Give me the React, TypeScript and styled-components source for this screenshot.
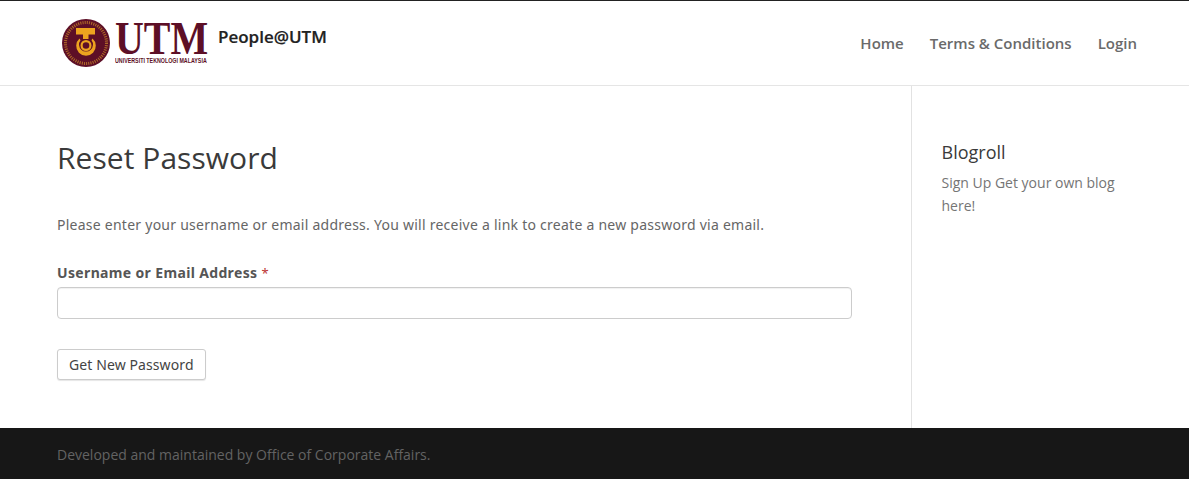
import React from "react";
import styled, { createGlobalStyle } from "styled-components";

const Global = createGlobalStyle`
  html, body { margin: 0; padding: 0; background: #fff; }
  body { font-family: "Open Sans", "Liberation Sans", sans-serif; color: #666; }
  * { box-sizing: border-box; }
`;
const Page = styled.div`
  width: 1189px; height: 479px; display: flex; flex-direction: column; overflow: hidden;
`;
const Header = styled.header`
  height: 86px; flex: none; border-top: 1px solid #222; border-bottom: 1px solid #e5e5e5;
  display: flex; justify-content: space-between; padding: 0 52px 0 62px;
`;
const Brand = styled.div`
  display: flex; align-items: flex-start; padding-top: 18px;
`;
const Wordmark = styled.div`
  display: flex; flex-direction: column; margin-left: 5px; width: 93px; color: #5d0f26;
`;
const Letters = styled.span`
  font: 700 47px/38px "Liberation Serif", serif; transform: scaleX(0.85); transform-origin: left; white-space: nowrap; height: 38px;
`;
const Tagline = styled.span`
  font: 700 7px/8px "Liberation Sans", sans-serif; white-space: nowrap; transform: scaleX(0.76); transform-origin: left; width: 121px;
`;
const SiteName = styled.span`
  font-size: 17px; font-weight: 600; color: #222; line-height: 22px; margin: 7px 0 0 10px; -webkit-text-stroke: 0.2px #222;
`;
const Nav = styled.nav`
  display: flex; gap: 26px; padding-top: 32px;
`;
const NavLink = styled.a`
  font-size: 15px; font-weight: 600; color: #6a6a6a; line-height: 21px;
`;
const Body = styled.div`
  flex: 1; display: flex; min-height: 0;
`;
const Main = styled.main`
  width: 912px; flex: none; border-right: 1px solid #e2e2e2; padding: 51px 59px 0 57px;
`;
const Title = styled.h1`
  margin: 0; font-size: 30px; font-weight: 400; line-height: 42px; color: #3a3a3a; letter-spacing: 0.05px;
`;
const Intro = styled.p`
  margin: 34px 0 0; font-size: 14px; line-height: 24px; color: #666; letter-spacing: 0.25px; white-space: nowrap;
  font-family: "Noto Sans", "Open Sans", sans-serif;
`;
const Label = styled.label`
  display: block; margin-top: 24px; font-size: 14px; font-weight: 700; line-height: 24px; color: #555; letter-spacing: 0.35px;
  font-family: "Noto Sans", "Open Sans", sans-serif;
`;
const Required = styled.span`
  color: #b33; font-weight: 400; font-size: 13px;
`;
const Input = styled.input`
  display: block; width: 795px; height: 32px; margin-top: 2px; border: 1px solid #ccc; border-radius: 4px; background: #fff;
  box-shadow: inset 0 1px 1px rgba(0,0,0,0.06); outline: none;
`;
const Button = styled.button`
  display: block; margin-top: 30px; height: 31px; padding: 0 11px; background: #fff; border: 1px solid #ccc; border-radius: 3px;
  box-shadow: 0 1px 1px rgba(0,0,0,0.1); font: 400 14px/20px "Noto Sans", "Open Sans", sans-serif; color: #444; letter-spacing: 0.1px;
`;
const Sidebar = styled.aside`
  flex: 1; padding: 53px 30px 0 29.5px;
`;
const WidgetTitle = styled.h4`
  margin: 0; font-size: 18px; font-weight: 400; line-height: 26px; color: #3a3a3a;
`;
const WidgetText = styled.p`
  margin: 6px 0 0; font-size: 14px; line-height: 23px; color: #757575; width: 190px;
`;
const Footer = styled.footer`
  height: 51px; flex: none; background: #171717; padding: 16px 57px 0; font-size: 14px; line-height: 22px; color: #636363;
`;

const Seal = () => (
  <svg width="48" height="48" viewBox="0 0 48 48" aria-hidden="true">
    <circle cx="24" cy="24" r="24" fill="#5d0f26" />
    <circle cx="24" cy="24" r="20.5" fill="none" stroke="#d9962a" strokeWidth="3" strokeDasharray="1.1 1.1" opacity="0.65" />
    <rect x="14" y="9" width="19" height="6.5" fill="#eda31f" />
    <rect x="21" y="15" width="5.5" height="5" fill="#eda31f" />
    <path d="M17.5 19.6a9.8 9.8 0 1 0 13 0a12 12 0 0 1 -1 1.6a7 7 0 1 1 -11 0a12 12 0 0 1 -1 -1.6z" fill="#eda31f" />
    <circle cx="24" cy="26.5" r="4.4" fill="none" stroke="#eda31f" strokeWidth="2.2" />
  </svg>
);

export default function App() {
  return (
    <Page>
      <Global />
      <Header>
        <Brand>
          <Seal />
          <Wordmark>
            <Letters>UTM</Letters>
            <Tagline>UNIVERSITI TEKNOLOGI MALAYSIA</Tagline>
          </Wordmark>
          <SiteName>People@UTM</SiteName>
        </Brand>
        <Nav>
          <NavLink>Home</NavLink>
          <NavLink>Terms &amp; Conditions</NavLink>
          <NavLink>Login</NavLink>
        </Nav>
      </Header>
      <Body>
        <Main>
          <Title>Reset Password</Title>
          <Intro>Please enter your username or email address. You will receive a link to create a new password via email.</Intro>
          <Label htmlFor="user">Username or Email Address <Required>*</Required></Label>
          <Input id="user" type="text" />
          <Button type="button">Get New Password</Button>
        </Main>
        <Sidebar>
          <WidgetTitle>Blogroll</WidgetTitle>
          <WidgetText>Sign Up Get your own blog here!</WidgetText>
        </Sidebar>
      </Body>
      <Footer>Developed and maintained by Office of Corporate Affairs.</Footer>
    </Page>
  );
}
